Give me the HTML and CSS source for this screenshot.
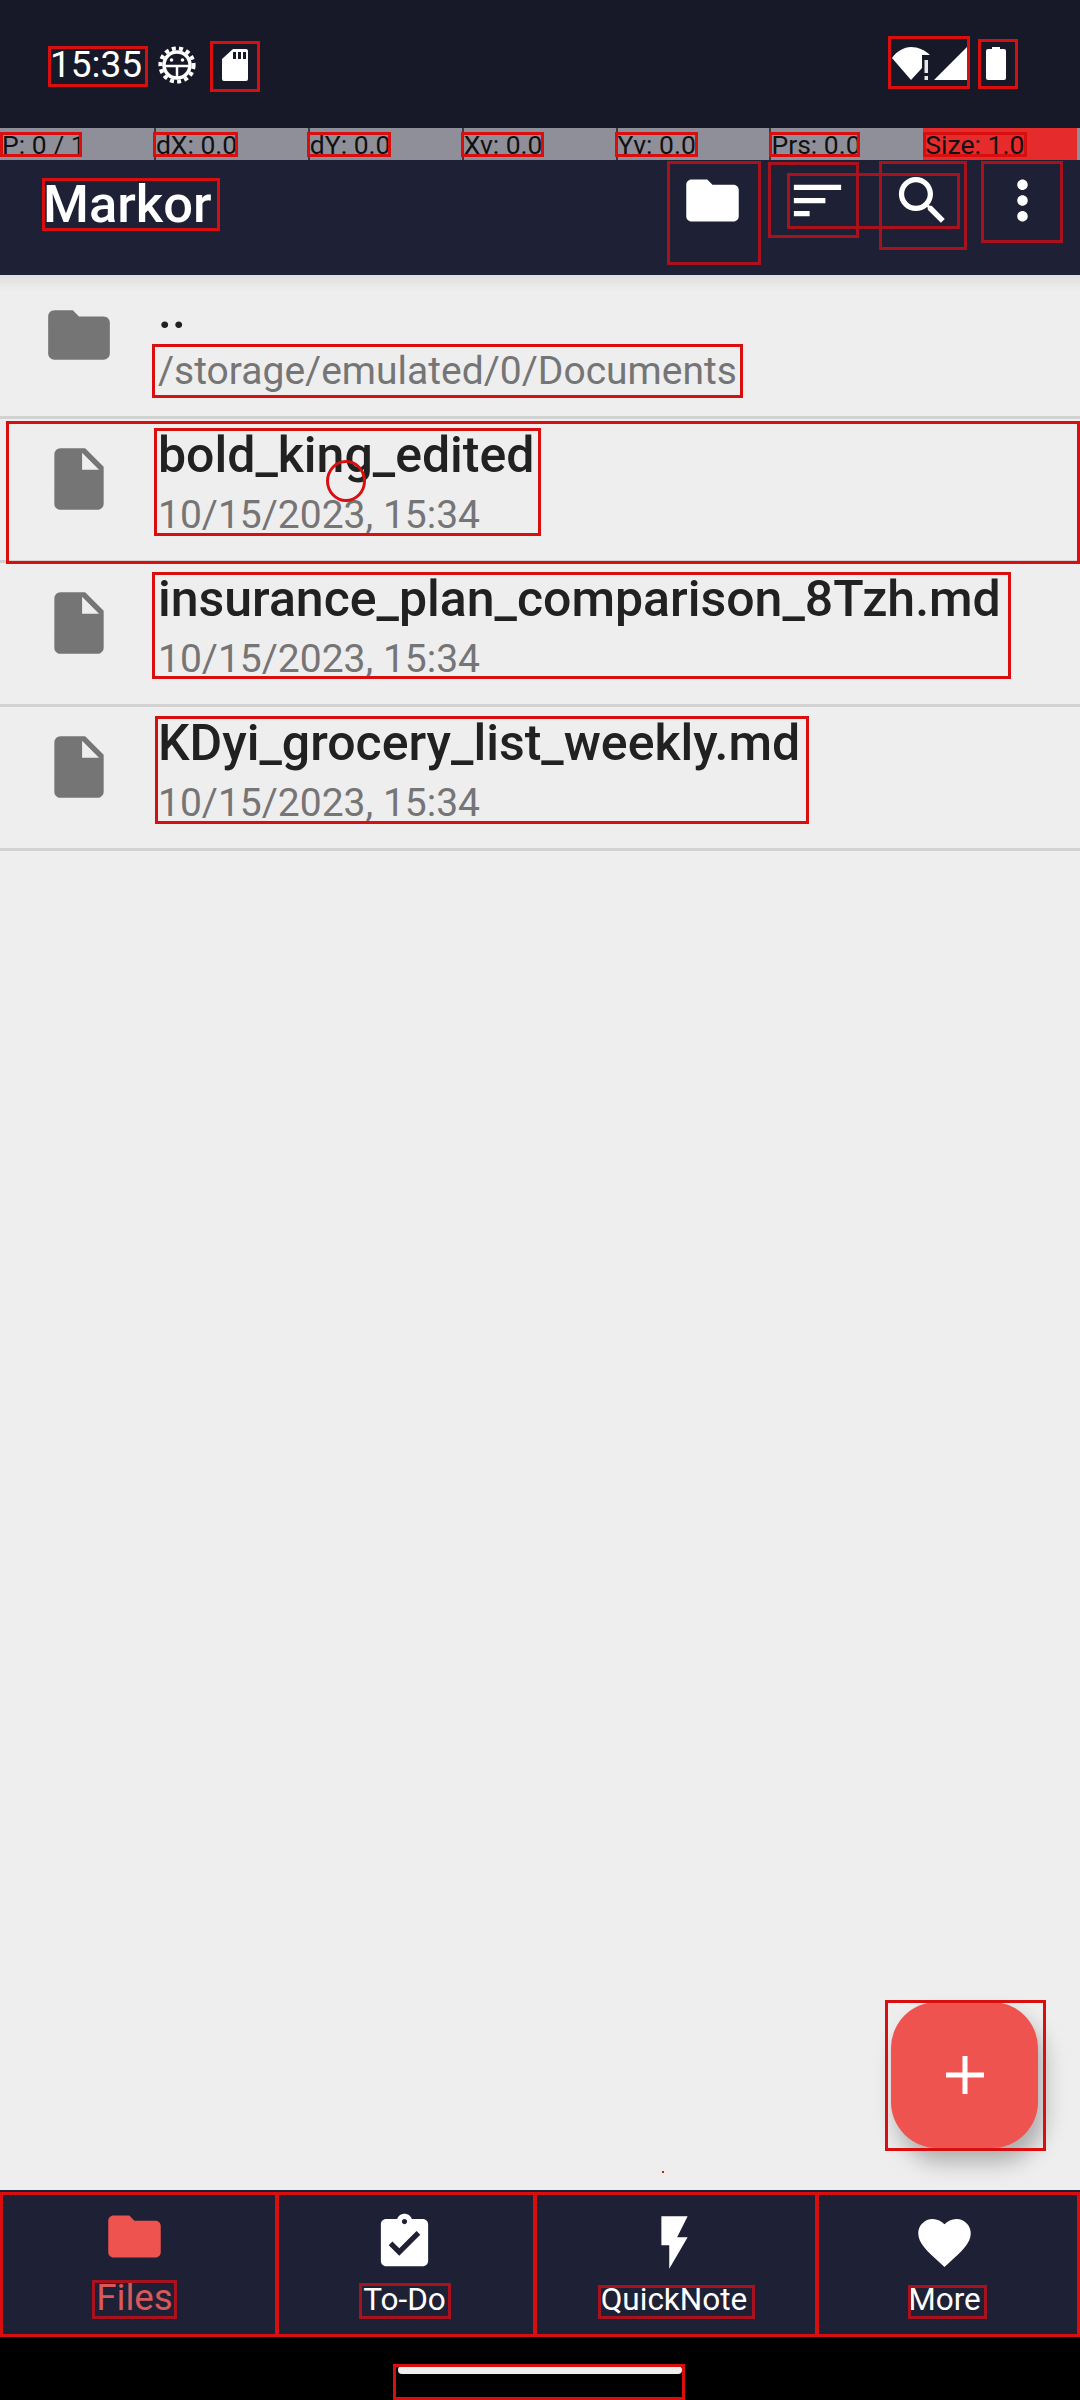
FILE: index.html
```html
<!DOCTYPE html>
<html lang="en">
<head>
  <meta charset="UTF-8" />
  <meta name="viewport" content="width=device-width, initial-scale=1.0" />
  <title>Markor</title>
  <link rel="stylesheet" href="styles.css">
</head>
<body>
  <div class="phone">
    <div class="status">
      <span class="time">15:35</span>
      <svg class="gear" viewBox="0 0 38 38" fill="none" stroke="#fff">
        <circle cx="19" cy="19" r="16.6" stroke-width="4" stroke-dasharray="4 3.25"/>
        <circle cx="19" cy="19" r="13" stroke-width="3.5"/>
        <path d="M6 20h26M19 20v12" stroke-width="2.5"/>
        <circle cx="13.5" cy="14" r="1.8" fill="#fff" stroke="none"/>
        <circle cx="24.5" cy="14" r="1.8" fill="#fff" stroke="none"/>
      </svg>
      <svg class="sd" viewBox="0 0 26 32">
        <path fill="#fff" fill-rule="evenodd" d="M11 0h13a2 2 0 0 1 2 2v28a2 2 0 0 1-2 2H2a2 2 0 0 1-2-2V10zM11 3v7h3V3zM16 3v7h3V3zM21 3v7h3V3z"/>
      </svg>
      <svg class="wifi" viewBox="0 0 38 33">
        <path fill="#fff" d="M0 11C5 4 12 0 19 0c7 0 14 3 19 8h-8v13L19 33z"/>
        <path fill="#e8e8e8" d="M32.500 13h3.500v13h-3.500zM32.500 29h3.500v4h-3.500z"/>
      </svg>
      <svg class="signal" viewBox="0 0 33 33"><path fill="#fff" d="M33 0v33H0z"/></svg>
      <svg class="battery" viewBox="0 0 20 33">
        <path fill="#fff" d="M6 0h8v2h4a2 2 0 0 1 2 2v27a2 2 0 0 1-2 2H2a2 2 0 0 1-2-2V4a2 2 0 0 1 2-2h4z"/>
      </svg>
    </div>

    <div class="pointer-bar">
      <span>P: 0 / 1</span>
      <span>dX: 0.0</span>
      <span>dY: 0.0</span>
      <span>Xv: 0.0</span>
      <span>Yv: 0.0</span>
      <span>Prs: 0.0</span>
      <span class="size">Size: 1.0</span>
    </div>

    <div class="toolbar">
      <div class="title">Markor</div>
      <div class="actions">
        <svg viewBox="0 0 24 24"><path d="M10 4H4c-1.1 0-2 .9-2 2v12c0 1.100.9 2 2 2h16c1.100 0 2-.9 2-2V8c0-1.100-.9-2-2-2h-8l-2-2z"/></svg>
        <svg viewBox="0 0 24 24"><path d="M3 18h6v-2H3v2zM3 6v2h18V6H3zm0 7h12v-2H3v2z"/></svg>
        <svg viewBox="0 0 24 24"><path d="M15.5 14h-.79l-.28-.27C15.41 12.59 16 11.11 16 9.5 16 5.91 13.09 3 9.5 3S3 5.91 3 9.5 5.91 16 9.5 16c1.61 0 3.09-.59 4.23-1.57l.27.28v.79l5 4.99L20.49 19l-4.99-5zm-6 0C7.01 14 5 11.99 5 9.5S7.01 5 9.5 5 14 7.01 14 9.500 11.990 14 9.500 14z"/></svg>
        <svg viewBox="0 0 24 24"><path d="M12 8c1.100 0 2-.9 2-2s-.9-2-2-2-2 .9-2 2 .9 2 2 2zm0 2c-1.100 0-2 .9-2 2s.9 2 2 2 2-.9 2-2-.9-2-2-2zm0 6c-1.100 0-2 .9-2 2s.9 2 2 2 2-.9 2-2-.9-2-2-2z"/></svg>
      </div>
    </div>

    <div class="list">
      <div class="row">
        <svg class="row-icon" viewBox="0 0 24 24"><path d="M10 4H4c-1.100 0-2 .9-2 2v12c0 1.100.9 2 2 2h16c1.100 0 2-.9 2-2V8c0-1.100-.9-2-2-2h-8l-2-2z"/></svg>
        <div class="row-text">
          <div class="name">..</div>
          <div class="sub">/storage/emulated/0/Documents</div>
        </div>
      </div>
      <div class="row">
        <svg class="row-icon" viewBox="0 0 24 24"><path d="M6 2c-1.100 0-1.990.9-1.990 2L4 20c0 1.100.89 2 1.990 2H18c1.100 0 2-.9 2-2V8l-6-6H6zm7 7V3.500L18.500 9H13z"/></svg>
        <div class="row-text">
          <div class="name">bold_king_edited</div>
          <div class="sub">10/15/2023, 15:34</div>
        </div>
      </div>
      <div class="row">
        <svg class="row-icon" viewBox="0 0 24 24"><path d="M6 2c-1.100 0-1.990.9-1.990 2L4 20c0 1.100.89 2 1.990 2H18c1.100 0 2-.9 2-2V8l-6-6H6zm7 7V3.500L18.500 9H13z"/></svg>
        <div class="row-text">
          <div class="name">insurance_plan_comparison_8Tzh.md</div>
          <div class="sub">10/15/2023, 15:34</div>
        </div>
      </div>
      <div class="row">
        <svg class="row-icon" viewBox="0 0 24 24"><path d="M6 2c-1.100 0-1.990.9-1.990 2L4 20c0 1.100.89 2 1.990 2H18c1.100 0 2-.9 2-2V8l-6-6H6zm7 7V3.500L18.500 9H13z"/></svg>
        <div class="row-text">
          <div class="name">KDyi_grocery_list_weekly.md</div>
          <div class="sub">10/15/2023, 15:34</div>
        </div>
      </div>

      <div class="fab">
        <svg viewBox="0 0 38 38"><path fill="#fff" d="M16.500 0h5v16.500H38v5H21.500V38h-5V21.500H0v-5h16.500z"/></svg>
      </div>
    </div>

    <div class="nav">
      <div class="tab tab-files active">
        <svg viewBox="0 0 24 24"><path d="M10 4H4c-1.100 0-2 .9-2 2v12c0 1.100.9 2 2 2h16c1.100 0 2-.9 2-2V8c0-1.100-.9-2-2-2h-8l-2-2z"/></svg>
        <span>Files</span>
      </div>
      <div class="tab tab-todo">
        <svg viewBox="0 0 24 24"><path fill-rule="evenodd" d="M19 3h-4.180C14.400 1.840 13.300 1 12 1c-1.300 0-2.400.84-2.820 2H5c-1.100 0-2 .9-2 2v14c0 1.100.9 2 2 2h14c1.100 0 2-.9 2-2V5c0-1.100-.9-2-2-2zm-7 0c.55 0 1 .45 1 1s-.45 1-1 1-1-.45-1-1 .45-1 1-1zm-2 14l-4-4 1.410-1.410L10 14.170l6.590-6.590L18 9l-8 8z"/></svg>
        <span>To-Do</span>
      </div>
      <div class="tab tab-note">
        <svg viewBox="0 0 24 24"><path d="M7 2v11h3v9l7-12h-4l4-8z"/></svg>
        <span>QuickNote</span>
      </div>
      <div class="tab tab-more">
        <svg viewBox="0 0 24 24"><path d="M12 21.350l-1.450-1.320C5.400 15.360 2 12.280 2 8.500 2 5.420 4.420 3 7.500 3c1.740 0 3.410.81 4.500 2.090C13.090 3.810 14.760 3 16.500 3 19.580 3 22 5.420 22 8.500c0 3.780-3.400 6.860-8.550 11.540L12 21.350z"/></svg>
        <span>More</span>
      </div>
    </div>

    <div class="gesture"><div class="home-bar"></div></div>

    <!-- red outlines drawn on top of the app -->
    <div class="marks">
      <div class="mark m-time"></div>
      <div class="mark m-sd"></div>
      <div class="mark m-wifi"></div>
      <div class="mark m-battery"></div>
      <div class="mark m-p"></div>
      <div class="mark m-dx"></div>
      <div class="mark m-dy"></div>
      <div class="mark m-xv"></div>
      <div class="mark m-yv"></div>
      <div class="mark m-prs"></div>
      <div class="mark m-size"></div>
      <div class="mark m-title"></div>
      <div class="mark dim m-folder"></div>
      <div class="mark dim m-sort"></div>
      <div class="mark dim m-wide"></div>
      <div class="mark dim m-search"></div>
      <div class="mark dim m-more"></div>
      <div class="mark m-path"></div>
      <div class="mark m-row"></div>
      <div class="mark m-bold"></div>
      <div class="mark m-insurance"></div>
      <div class="mark m-kdyi"></div>
      <div class="touch"></div>
      <div class="mark m-fab"></div>
      <div class="speck"></div>
      <div class="mark m-tab1"></div>
      <div class="mark m-tab2"></div>
      <div class="mark m-tab3"></div>
      <div class="mark m-tab4"></div>
      <div class="mark dim m-files"></div>
      <div class="mark dim m-todo"></div>
      <div class="mark dim m-note"></div>
      <div class="mark dim m-morelabel"></div>
      <div class="mark m-home"></div>
    </div>
  </div>
</body>
</html>
```
FILE: styles.css
```css
body {
  margin: 0;
  font-family: 'Roboto', sans-serif;
}
.phone {
  position: relative;
  width: 1080px;
  height: 2400px;
  overflow: hidden;
  display: flex;
  flex-direction: column;
  background: #eeeeee;
}

/* status bar */
.status {
  height: 128px;
  flex: none;
  display: flex;
  align-items: flex-start;
  background: #171929;
  color: #fff;
}
.time {
  margin: 42px 0 0 50px;
  font-size: 37px;
  line-height: 46px;
}
.gear {
  width: 38px;
  height: 38px;
  margin: 46px 0 0 16px;
}
.sd {
  width: 26px;
  height: 32px;
  margin: 49px 0 0 26px;
}
.wifi {
  width: 38px;
  height: 33px;
  margin: 47px 0 0 auto;
}
.signal {
  width: 33px;
  height: 33px;
  margin: 47px 0 0 4px;
}
.battery {
  width: 20px;
  height: 33px;
  margin: 47px 74px 0 19px;
}

/* pointer location strip */
.pointer-bar {
  height: 32px;
  flex: none;
  display: grid;
  grid-template-columns: repeat(7, 153.9px);
  background: #8f8f99;
  color: #111;
  font-size: 26.5px;
  line-height: 33px;
}
.pointer-bar span {
  border-left: 2px solid #3c3c48;
  white-space: nowrap;
}
.pointer-bar span:first-child {
  border-left: none;
  padding-left: 2px;
}
.pointer-bar .size {
  background: #e52b2b;
  border-left: none;
  padding-left: 2px;
}

/* toolbar */
.toolbar {
  height: 115px;
  flex: none;
  display: flex;
  justify-content: space-between;
  background: #1e2035;
  color: #fff;
}
.title {
  margin: 13px 0 0 43px;
  font-size: 52.5px;
  font-weight: 500;
  line-height: 62px;
}
.actions {
  display: flex;
  gap: 42px;
  margin: 9px 26px 0 0;
}
.actions svg {
  width: 63px;
  height: 63px;
  fill: #fff;
}
.actions svg:last-child {
  margin-left: -5px;
}

/* file list */
.list {
  position: relative;
  flex: 1;
  background: linear-gradient(to bottom, #dedede, #eeeeee 16px);
}
.row {
  box-sizing: border-box;
  height: 144px;
  display: flex;
  border-bottom: 3px solid #d2d2d2;
}
.row-icon {
  width: 74px;
  height: 74px;
  flex: none;
  margin: 23px 42px 0 42px;
  fill: #757575;
}
.row-text {
  padding-top: 8px;
  white-space: nowrap;
}
.name {
  color: #212121;
  font-size: 50px;
  font-weight: 500;
  line-height: 56px;
}
.sub {
  margin-top: 4px;
  color: #757575;
  font-size: 39px;
  line-height: 56px;
}
.fab {
  position: absolute;
  right: 42px;
  bottom: 42px;
  width: 147px;
  height: 146px;
  display: flex;
  align-items: center;
  justify-content: center;
  background: #ef5350;
  border-radius: 46px;
  box-shadow: 6px 14px 22px rgba(0, 0, 0, 0.28);
}
.fab svg {
  width: 38px;
  height: 38px;
}

/* bottom navigation */
.nav {
  height: 147px;
  flex: none;
  display: flex;
  background: #1e2035;
  color: #fff;
  font-size: 31.5px;
}
.tab {
  box-sizing: border-box;
  display: flex;
  flex-direction: column;
  align-items: center;
  padding-top: 21px;
  line-height: 36px;
}
.tab svg {
  width: 63px;
  height: 63px;
  flex: none;
  fill: #fff;
}
.tab span {
  margin-top: 8px;
}
.tab-files {
  width: 277px;
  padding-right: 8px;
}
.tab-todo {
  width: 259px;
  padding-right: 4px;
}
.tab-note {
  width: 281px;
  padding-right: 5px;
}
.tab-more {
  width: 263px;
  padding-right: 8px;
}
.active {
  padding-top: 15px;
  color: #d9595b;
  font-size: 36.75px;
}
.active svg {
  fill: #ef5350;
}
.active span {
  margin-top: 12px;
}
.gesture {
  height: 63px;
  flex: none;
  box-sizing: border-box;
  padding: 29px 0 0 398px;
  background: #000;
}
.home-bar {
  width: 284px;
  height: 8px;
  background: #eeeeee;
  border-radius: 4px;
}

/* outlines over the app */
.marks {
  position: absolute;
  inset: 0;
}
.mark {
  position: absolute;
  box-sizing: border-box;
  border: 3px solid #d90f0f;
}
.dim {
  border-color: #a8121c;
}
.touch {
  position: absolute;
  left: 326px;
  top: 460px;
  width: 40px;
  height: 42px;
  box-sizing: border-box;
  border: 3px solid #d90f0f;
  border-radius: 50%;
}
.speck {
  position: absolute;
  left: 662px;
  top: 2171px;
  width: 2px;
  height: 2px;
  background: #c81e1e;
}
.m-time { left: 48px; top: 46px; width: 100px; height: 41px; }
.m-sd { left: 210px; top: 41px; width: 50px; height: 51px; }
.m-wifi { left: 888px; top: 36px; width: 82px; height: 53px; }
.m-battery { left: 978px; top: 39px; width: 40px; height: 50px; }
.m-p { left: 0; top: 132px; width: 82px; height: 25px; }
.m-dx { left: 153px; top: 132px; width: 85px; height: 25px; }
.m-dy { left: 307px; top: 132px; width: 84px; height: 25px; }
.m-xv { left: 461px; top: 132px; width: 83px; height: 25px; }
.m-yv { left: 615px; top: 132px; width: 83px; height: 25px; }
.m-prs { left: 769px; top: 132px; width: 91px; height: 25px; }
.m-size { left: 923px; top: 132px; width: 104px; height: 25px; }
.m-title { left: 42px; top: 178px; width: 178px; height: 53px; }
.m-folder { left: 667px; top: 161px; width: 94px; height: 104px; }
.m-sort { left: 768px; top: 162px; width: 91px; height: 76px; }
.m-wide { left: 787px; top: 173px; width: 173px; height: 56px; }
.m-search { left: 879px; top: 161px; width: 88px; height: 89px; }
.m-more { left: 981px; top: 161px; width: 82px; height: 82px; }
.m-path { left: 152px; top: 344px; width: 591px; height: 54px; }
.m-row { left: 6px; top: 421px; width: 1074px; height: 143px; }
.m-bold { left: 154px; top: 428px; width: 387px; height: 108px; }
.m-insurance { left: 152px; top: 572px; width: 859px; height: 107px; }
.m-kdyi { left: 155px; top: 716px; width: 654px; height: 108px; }
.m-fab { left: 885px; top: 2000px; width: 161px; height: 151px; }
.m-tab1 { left: 0; top: 2192px; width: 278px; height: 145px; }
.m-tab2 { left: 276px; top: 2192px; width: 260px; height: 145px; }
.m-tab3 { left: 534px; top: 2192px; width: 284px; height: 145px; }
.m-tab4 { left: 816px; top: 2192px; width: 264px; height: 145px; }
.m-files { left: 92px; top: 2280px; width: 85px; height: 39px; }
.m-todo { left: 359px; top: 2283px; width: 92px; height: 36px; }
.m-note { left: 598px; top: 2285px; width: 157px; height: 34px; }
.m-morelabel { left: 908px; top: 2285px; width: 79px; height: 34px; }
.m-home { left: 393px; top: 2364px; width: 292px; height: 36px; }
```
